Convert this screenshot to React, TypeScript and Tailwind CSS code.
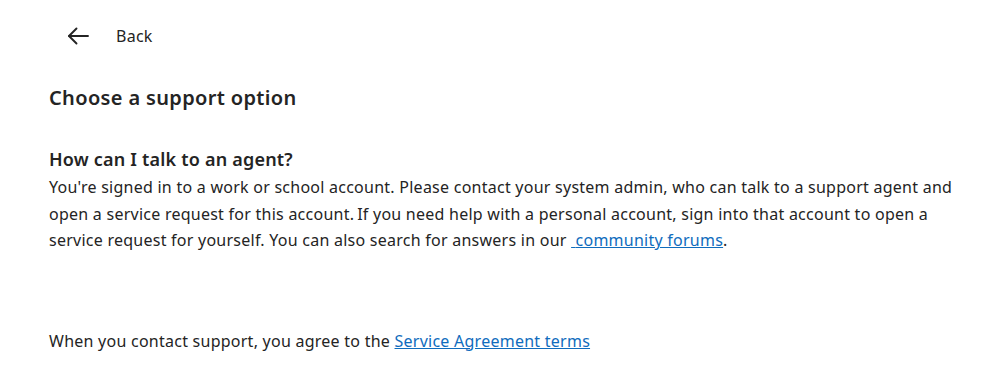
import React from "react";

export default function App() {
  return (
    <div
      className="w-[995px] h-[378px] bg-white text-[#242424] overflow-hidden"
      style={{ fontFamily: '"Noto Sans", "Open Sans", sans-serif' }}
    >
      <div className="pl-[49px] pr-[30px]">
        <div className="flex items-center h-[40px] mt-[16px] pl-[18px]">
          <svg width="22" height="18" viewBox="0 0 22 18" fill="none" stroke="#242424" strokeWidth="1.9" strokeLinecap="round" strokeLinejoin="round">
            <path d="M21 9H2" />
            <path d="M9.5 1.5L2 9l7.5 7.5" />
          </svg>
          <span className="ml-[27px] text-[16px] tracking-[0.25px]">Back</span>
        </div>
        <h1 className="mt-[28px] text-[20px] font-semibold leading-[28px] tracking-[0.35px]">Choose a support option</h1>
        <h2 className="mt-[34px] text-[18px] font-semibold leading-[26px] tracking-[0.2px]">How can I talk to an agent?</h2>
        <p className="mt-[2px] text-[16px] leading-[26.5px] tracking-[0.25px] max-w-[910px]">
          You're signed in to a work or school account. Please contact your system admin, who can talk to a support agent and open a service request for this account.{"\u2009"}If you need help with a personal account, sign into that account to open a service request for yourself. You can also search for answers in our{" "}
          <a href="#" className="text-[#0f6cbd] underline">{"\u00a0"}community forums</a>.
        </p>
        <p className="mt-[74px] text-[16px] leading-[26px] tracking-[0.25px]">
          When you contact support, you agree to the{" "}
          <a href="#" className="text-[#0f6cbd] underline">Service Agreement terms</a>
        </p>
      </div>
    </div>
  );
}
